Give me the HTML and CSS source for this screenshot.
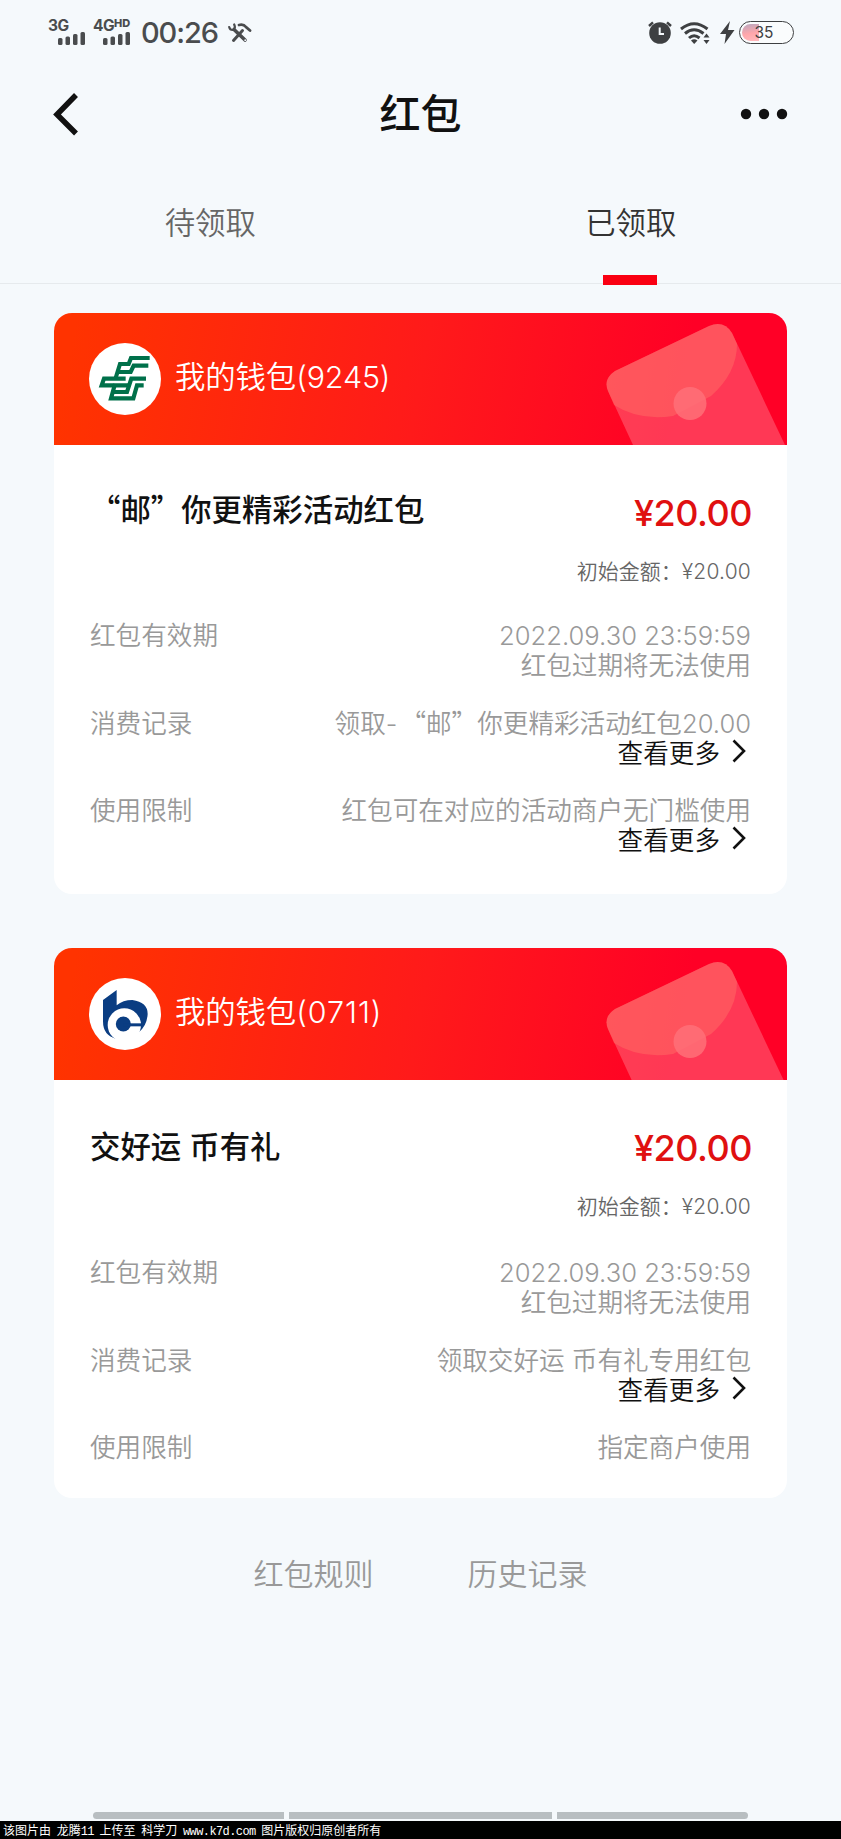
FILE: index.html
```html
<!DOCTYPE html>
<html lang="zh-CN">
<head>
<meta charset="utf-8">
<title>红包</title>
<link rel="stylesheet" href="styles.css">
</head>
<body>
<div class="screen">
  <div class="status">
    <div class="sim sim-a">
      <span class="net">3G</span>
      <svg class="bars" width="28" height="13" viewBox="0 0 28 13"><rect x="0" y="6" width="4.5" height="7" rx="1.5"/><rect x="7.5" y="4.5" width="4.5" height="8.5" rx="1.5"/><rect x="15" y="2" width="4.5" height="11" rx="1.5"/><rect x="22.5" y="0" width="4.5" height="13" rx="1.5"/></svg>
    </div>
    <div class="sim sim-b">
      <span class="net">4G<span class="hd">HD</span></span>
      <svg class="bars" width="28" height="13" viewBox="0 0 28 13"><rect x="0" y="6" width="4.5" height="7" rx="1.5"/><rect x="7.5" y="4.5" width="4.5" height="8.5" rx="1.5"/><rect x="15" y="2" width="4.5" height="11" rx="1.5"/><rect x="22.5" y="0" width="4.5" height="13" rx="1.5"/></svg>
    </div>
    <span class="time">00:26</span>
    <svg class="tools" width="24" height="20" viewBox="0 0 24 20"><g fill="none" stroke="#4a4c4e" stroke-linecap="round"><path d="M5.500 17.500L14.500 7.500" stroke-width="3"/><path d="M6 6.500L17 17" stroke-width="3.600"/><path d="M1.200 4Q2 7.200 5 7Q8 5.500 6.200 1.500" stroke-width="2.200"/><path d="M11 2Q15.500 .8 18 4L22 7.500" stroke-width="2.800"/></g><circle cx="17.200" cy="17.200" r=".9" fill="#f5f9fc"/></svg>
    <div class="status-right">
      <svg width="24" height="23" viewBox="0 0 24 23"><circle cx="12" cy="12" r="10.800" fill="#3e4042"/><path d="M1 5L5 1.300M23 5L19 1.300" stroke="#3e4042" stroke-width="2.400" fill="none"/><path d="M11.700 6.500V13H16" stroke="#f5f9fc" stroke-width="2" fill="none"/></svg>
      <svg class="wifi" width="30" height="22" viewBox="0 0 30 22"><g fill="none" stroke="#3e4042" stroke-width="3"><path d="M1 7Q14 -3.500 27.500 7"/><path d="M5 11.500Q14 4 23.500 11.500"/><path d="M9 16Q14 11.500 19.500 16"/></g><path d="M11 18.500Q14 16 17.500 18.500L14.200 22Z" fill="#3e4042"/><path d="M23.500 15.500L26.500 11.500L29.500 15.500ZM23.500 18L26.500 22L29.500 18Z" fill="#3e4042"/></svg>
      <svg class="bolt" width="15" height="23" viewBox="0 0 15 23"><path d="M10 0L0 13H6L4.500 23L14.500 9H8Z" fill="#3e4042"/></svg>
      <div class="battery"><i class="charge"></i><span class="level">35</span></div>
    </div>
  </div>

  <div class="nav">
    <svg width="28" height="44" viewBox="0 0 28 44"><path d="M26 3L7 22.500L26 41.500" fill="none" stroke="#111" stroke-width="5.500"/></svg>
    <h1 class="nav-title">红包</h1>
    <svg class="dots" width="48" height="12" viewBox="0 0 48 12" fill="#111"><circle cx="6" cy="6" r="5.200"/><circle cx="24" cy="6" r="5.200"/><circle cx="42" cy="6" r="5.200"/></svg>
  </div>

  <div class="tabs">
    <div class="tab">待领取</div>
    <div class="tab tab-active">已领取</div>
  </div>

  <div class="card">
    <div class="card-head">
      <div class="logo">
        <svg width="72" height="72" viewBox="0 0 216 216"><g transform="translate(18 21)" fill="none" stroke="#00704a" stroke-width="12.500"><path d="M164 24H108L101 42H75L62 84"/><path d="M160 47H116L107 66H64"/><path d="M92 86H27L20 106H100"/><path d="M153 86H109L96 126H54"/><path d="M146 106H126L115 145H48L60 102"/></g></svg>
      </div>
      <span class="wallet">我的钱包(9245)</span>
      <svg class="envelope" width="190" height="132" viewBox="0 0 190 132"><path d="M11 78Q6 66 18 58L112 13Q127 7 135 20L188 132H36Z" fill="#fff" fill-opacity=".22"/><path d="M11 78Q6 66 18 58L112 13Q127 7 135 20L140 31Q140 60 114 83L76 103Q42 108 17 92Z" fill="#ff7a6a" fill-opacity=".42"/><circle cx="93" cy="90.500" r="16.500" fill="#ff7078" fill-opacity=".85"/></svg>
    </div>
    <div class="card-body">
      <div class="summary">
        <h2 class="name"><span class="zh">“邮”你更精彩活动红包</span></h2>
        <span class="amount">¥20.00</span>
      </div>
      <div class="initial">初始金额：<span class="initial-num">¥20.00</span></div>
      <div class="row"><span>红包有效期</span><div class="value"><span class="date">2022.09.30 23:59:59</span><span>红包过期将无法使用</span></div></div>
      <div class="row"><span>消费记录</span><div class="value"><span class="record">领取<span class="dash">-</span><span class="zh">“邮”</span>你更精彩活动红包20.00</span><a class="more">查看更多<svg width="14" height="24" viewBox="0 0 14 24"><path d="M1.500 1.500L12 12L1.500 22.500" fill="none" stroke="#111" stroke-width="2.600"/></svg></a></div></div>
      <div class="row"><span>使用限制</span><div class="value"><span>红包可在对应的活动商户无门槛使用</span><a class="more">查看更多<svg width="14" height="24" viewBox="0 0 14 24"><path d="M1.500 1.500L12 12L1.500 22.500" fill="none" stroke="#111" stroke-width="2.600"/></svg></a></div></div>
    </div>
  </div>

  <div class="card card-second">
    <div class="card-head">
      <div class="logo">
        <svg width="72" height="72" viewBox="0 0 216 216"><path fill="#0a3d82" d="M42 66L83 36V82Q102 66 130 66Q176 72 176 108Q174 144 148 164V120H80V182Q42 172 42 130Z"/><circle cx="106" cy="141" r="50" fill="#fff"/><circle cx="103" cy="138" r="22.500" fill="#0a3d82"/><path d="M104 136H156V145H104Z" fill="#0a3d82"/></svg>
      </div>
      <span class="wallet">我的钱包<span class="wide">(0711)</span></span>
      <svg class="envelope" width="190" height="132" viewBox="0 -3 190 132"><path d="M11 78Q6 66 18 58L112 13Q127 7 135 20L188 132H36Z" fill="#fff" fill-opacity=".22"/><path d="M11 78Q6 66 18 58L112 13Q127 7 135 20L140 31Q140 60 114 83L76 103Q42 108 17 92Z" fill="#ff7a6a" fill-opacity=".42"/><circle cx="93" cy="90.500" r="16.500" fill="#ff7078" fill-opacity=".85"/></svg>
    </div>
    <div class="card-body">
      <div class="summary">
        <h2 class="name">交好运 币有礼</h2>
        <span class="amount">¥20.00</span>
      </div>
      <div class="initial">初始金额：<span class="initial-num">¥20.00</span></div>
      <div class="row"><span>红包有效期</span><div class="value"><span class="date">2022.09.30 23:59:59</span><span>红包过期将无法使用</span></div></div>
      <div class="row"><span>消费记录</span><div class="value"><span>领取交好运 币有礼专用红包</span><a class="more">查看更多<svg width="14" height="24" viewBox="0 0 14 24"><path d="M1.500 1.500L12 12L1.500 22.500" fill="none" stroke="#111" stroke-width="2.600"/></svg></a></div></div>
      <div class="row"><span>使用限制</span><div class="value"><span>指定商户使用</span></div></div>
    </div>
  </div>

  <div class="links"><a>红包规则</a><a>历史记录</a></div>

  <div class="gesture"><i class="g-side g-left"></i><i class="g-mid"></i><i class="g-side g-right"></i></div>
  <div class="credit">该图片由 龙腾<span class="mono">11</span> 上传至 科学刀 <span class="mono">www.k7d.com</span> 图片版权归原创者所有</div>
</div>
</body>
</html>
```
FILE: styles.css
```css
* { box-sizing: border-box; }
body {
  margin: 0;
  background: #f5f9fc;
  color: #999;
  font-family: Inter, "Noto Sans CJK SC", sans-serif;
  font-weight: 350;
}
svg { display: block; flex: none; }
.screen {
  width: 841px;
  height: 1839px;
  display: flex;
  flex-direction: column;
  overflow: hidden;
}
.zh { font-family: "Noto Sans CJK SC", sans-serif; line-height: 0; }

.status {
  height: 65px;
  padding: 0 47px 0 48px;
  display: flex;
  align-items: center;
  color: #4a4c4e;
}
.sim { height: 25px; display: flex; flex-direction: column; flex: none; }
.sim-a { width: 45px; }
.sim-b { width: 48px; }
.net { height: 12px; line-height: 11px; font-size: 15.5px; font-weight: 700; letter-spacing: -0.6px; white-space: nowrap; display: flex; }
.hd { font-size: 11px; font-weight: 800; line-height: 7px; letter-spacing: 0; }
.bars { margin-left: 9.5px; fill: #4a4c4e; }
.time { font-size: 29px; line-height: 30px; font-weight: 450; width: 87px; letter-spacing: -1.1px; }
.status-right { margin-left: auto; display: flex; align-items: center; }
.wifi { margin-left: 8px; }
.bolt { margin-left: 10px; }
.battery {
  display: flex;
  align-items: center;
  width: 55px;
  height: 23px;
  margin-left: 4px;
  padding-left: 1.5px;
  border: 1.5px solid #3e4042;
  border-radius: 12px;
  background: #fafcfd;
  color: #3e4042;
}
.charge { width: 17px; height: 17px; border-radius: 9px 0 0 9px; background: linear-gradient(170deg, #b9a8c0, #ffa6ab 55%, #ffb9bd); }
.level { margin-left: -4px; font-size: 15.5px; line-height: 20px; font-weight: 400; }

.nav {
  height: 98px;
  padding: 0 53px 0 50px;
  display: grid;
  grid-template-columns: 1fr auto 1fr;
  align-items: center;
}
.nav-title { margin: 0 0 0 3px; font-size: 41px; line-height: 60px; font-weight: 500; color: #111; }
.dots { justify-self: end; }

.tabs { height: 121px; display: flex; border-bottom: 1px solid #e6eaed; }
.tab { flex: 1; line-height: 121px; font-size: 30.4px; text-align: center; color: #666; position: relative; }
.tab-active { color: #333; }
.tab-active::after {
  content: "";
  position: absolute;
  left: 50%;
  bottom: -2px;
  width: 54px;
  height: 10px;
  margin-left: -27.5px;
  background: #fa0012;
}

.card {
  width: 733px;
  height: 581px;
  margin: 29px 0 0 54px;
  border-radius: 18px;
  background: #fff;
  overflow: hidden;
  flex: none;
}
.card-second { margin-top: 54px; height: 550px; }
.card-head {
  height: 132px;
  padding-left: 35px;
  display: flex;
  align-items: center;
  background: linear-gradient(100deg, #ff3300 3%, #ff1a1a 50%, #ff0026 85%);
}
.logo { width: 72px; height: 72px; border-radius: 50%; background: #fff; }
.wallet { margin: 0 0 4px 14px; font-size: 30.4px; line-height: 40px; color: #fff; letter-spacing: -0.1px; }
.wide { letter-spacing: 1px; }
.envelope { margin-left: auto; }

.card-body { padding: 42px 36px 0; }
.card-second .card-body { padding-top: 44px; }
.summary { height: 46px; display: flex; justify-content: space-between; align-items: center; }
.name { margin: 0; font-size: 30.4px; line-height: 46px; font-weight: 500; color: #111; }
.amount { font-size: 36px; line-height: 46px; font-weight: 500; letter-spacing: -0.5px; color: #e01010; padding-top: 5px; margin-right: -1px; }
.card-second .amount { padding-top: 2px; }
.initial { margin-top: 23px; height: 32px; line-height: 32px; font-size: 21px; text-align: right; color: #666; }
.initial-num { letter-spacing: 0.2px; }
.card-second .initial { margin-top: 21px; height: 34px; }
.row { margin-top: 27.5px; display: flex; justify-content: space-between; font-size: 25.6px; line-height: 30px; }
.row > span { height: 30px; }
.initial + .row { margin-top: 33px; }
.value { display: flex; flex-direction: column; align-items: flex-end; white-space: nowrap; }
.value > * { height: 30px; }
.dash { letter-spacing: 3px; }
.more { display: flex; gap: 12px; padding-right: 5px; font-size: 25.6px; color: #111; }

.links {
  margin-top: 54px;
  display: flex;
  justify-content: center;
  gap: 94px;
  font-size: 30px;
  line-height: 44px;
}
.gesture { margin-top: auto; padding-left: 93px; display: flex; gap: 5px; }
.gesture i { height: 7px; background: #b8bec1; }
.g-side { width: 191px; }
.g-mid { width: 263px; }
.g-left { border-radius: 4px 0 0 4px; }
.g-right { border-radius: 0 4px 4px 0; }
.credit {
  height: 18px;
  margin-top: 2px;
  padding-left: 3px;
  background: #000;
  color: #fff;
  font: 400 12px/18px "Noto Sans CJK SC", sans-serif;
  white-space: pre;
  word-spacing: 3px;
}
.mono { font-family: "Liberation Mono", monospace; font-size: 12px; letter-spacing: -0.6px; }
```
